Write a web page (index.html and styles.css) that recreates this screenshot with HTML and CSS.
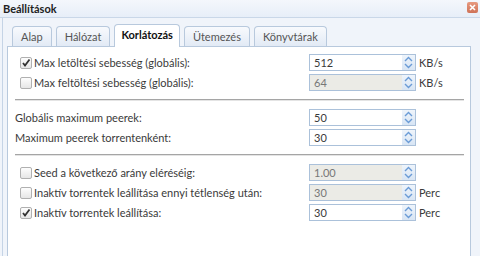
FILE: index.html
```html
<!DOCTYPE html>
<html lang="hu">
<head>
    <meta charset="UTF-8">
    <title>Beállítások</title>
    <link rel="stylesheet" href="styles.css">
</head>
<body>
    <div class="dialog">
        <div class="titlebar">
            <span class="title">Beállítások</span>
            <span class="close">
                <svg width="7" height="7" viewBox="0 0 7 7"><path d="M1 1L6 6M6 1L1 6" stroke="#fff" stroke-width="1.6"/></svg>
            </span>
        </div>
        <div class="dialog-body">
            <ul class="tabs">
                <li>Alap</li>
                <li>Hálózat</li>
                <li class="active">Korlátozás</li>
                <li>Ütemezés</li>
                <li>Könyvtárak</li>
            </ul>
            <div class="panel">
                <div class="rows">
                    <div class="row">
                        <label class="label check"><span class="box checked"></span>Max letöltési sebesség (globális):</label>
                        <div class="field"><span class="value">512</span><span class="spin"></span></div>
                        <span class="unit">KB/s</span>
                    </div>
                    <div class="row">
                        <label class="label check"><span class="box"></span>Max feltöltési sebesség (globális):</label>
                        <div class="field disabled"><span class="value">64</span><span class="spin"></span></div>
                        <span class="unit">KB/s</span>
                    </div>
                </div>
                <div class="sep"></div>
                <div class="rows">
                    <div class="row">
                        <label class="label">Globális maximum peerek:</label>
                        <div class="field"><span class="value">50</span><span class="spin"></span></div>
                    </div>
                    <div class="row">
                        <label class="label">Maximum peerek torrentenként:</label>
                        <div class="field"><span class="value">30</span><span class="spin"></span></div>
                    </div>
                </div>
                <div class="sep"></div>
                <div class="rows">
                    <div class="row">
                        <label class="label check"><span class="box"></span>Seed a következő arány eléréséig:</label>
                        <div class="field disabled"><span class="value">1.00</span><span class="spin"></span></div>
                    </div>
                    <div class="row">
                        <label class="label check"><span class="box"></span>Inaktív torrentek leállítása ennyi tétlenség után:</label>
                        <div class="field disabled"><span class="value">30</span><span class="spin"></span></div>
                        <span class="unit">Perc</span>
                    </div>
                    <div class="row">
                        <label class="label check"><span class="box checked"></span>Inaktív torrentek leállítása:</label>
                        <div class="field"><span class="value">30</span><span class="spin"></span></div>
                        <span class="unit">Perc</span>
                    </div>
                </div>
            </div>
        </div>
    </div>
</body>
</html>
```

FILE: styles.css
```css
body {
    margin: 0;
    font-family: Lato, "Liberation Sans", sans-serif;
    font-size: 11px;
    color: #3a3a3a;
    background: #fff;
}

.dialog {
    height: 256px;
    overflow: hidden;
    background: #f0f4fa;
}

.titlebar {
    height: 17px;
    display: flex;
    justify-content: space-between;
    align-items: center;
    padding: 0 2px 0 3px;
    border-bottom: 1px solid #c9d7e8;
    background: linear-gradient(#f4f7fc, #e7eef8);
}

.title {
    font-weight: bold;
    color: #222;
}

.close {
    width: 11px;
    height: 11px;
    align-self: flex-start;
    margin-top: 2px;
    border-radius: 2px;
    background: linear-gradient(#e79a80, #cf7257);
    display: flex;
    align-items: center;
    justify-content: center;
}

.dialog-body {
    height: 238px;
    margin-left: 2px;
    padding: 6px 9px 0 4px;
    border-left: 1px solid #c5d4e6;
    display: flex;
    flex-direction: column;
}

.tabs {
    list-style: none;
    margin: 0;
    padding: 0 0 0 5px;
    display: flex;
    align-items: flex-end;
    gap: 4px;
}

.tabs li {
    height: 20px;
    line-height: 20px;
    padding: 0 8px;
    box-sizing: border-box;
    border: 1px solid #b8c9dd;
    border-bottom: none;
    border-radius: 4px 4px 0 0;
    background: linear-gradient(#f8fafd, #e2eaf5);
    color: #555;
}

.tabs li.active {
    height: 23px;
    margin-bottom: -1px;
    padding: 0 6px;
    position: relative;
    background: #fff;
    color: #111;
    font-weight: bold;
}

.panel {
    flex: 1;
    background: #fff;
    border: 1px solid #b8c9dd;
    padding: 7px 6px 0 7px;
}

.rows {
    display: flex;
    flex-direction: column;
    gap: 3px;
}

.row {
    display: flex;
    align-items: center;
    height: 17px;
}

.label {
    width: 294px;
    display: flex;
    align-items: center;
}

.label.check {
    padding-left: 5px;
    box-sizing: border-box;
}

.box {
    width: 12px;
    height: 12px;
    box-sizing: border-box;
    margin-right: 2px;
    border: 1px solid #b0b0b0;
    border-radius: 2px;
    background: linear-gradient(#fdfdfd, #e6e6e6);
}

.box.checked {
    background: url("data:image/svg+xml,%3Csvg xmlns='http://www.w3.org/2000/svg' width='10' height='10'%3E%3Cpath d='M2 5L4 7.5L8.5 1.5' fill='none' stroke='%23333' stroke-width='1.8'/%3E%3C/svg%3E") center no-repeat, linear-gradient(#fdfdfd, #e6e6e6);
}

.field {
    width: 107px;
    height: 17px;
    box-sizing: border-box;
    border: 1px solid #abc1da;
    background: #fff;
    display: flex;
}

.field.disabled {
    background: #ebebe6;
    color: #777;
}

.value {
    flex: 1;
    padding-left: 4px;
    line-height: 15px;
}

.spin {
    width: 13px;
    background: url("data:image/svg+xml,%3Csvg xmlns='http://www.w3.org/2000/svg' width='13' height='15'%3E%3Cpath d='M3 6L6.5 2.5L10 6M3 9L6.5 12.5L10 9' fill='none' stroke='%236a9bd6' stroke-width='1.4'/%3E%3C/svg%3E") center no-repeat, linear-gradient(#eef4fb, #d8e5f4);
}

.unit {
    margin-left: 3px;
}

.sep {
    height: 1px;
    margin: 8px 0 9px;
    background: #a5a5a5;
    box-shadow: 0 1px 0 #e4e4e4;
}
```
